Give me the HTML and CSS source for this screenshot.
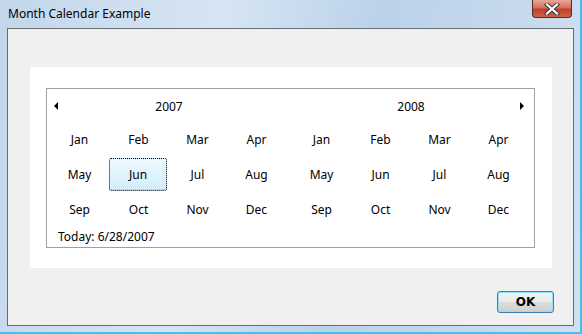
FILE: index.html
```html
<!DOCTYPE html>
<html lang="en">

<head>
    <meta charset="UTF-8">
    <title>Month Calendar Example</title>
    <link rel="stylesheet" href="styles.css">
</head>

<body>
    <div class="window">
        <div class="titlebar">
            <span class="title">Month Calendar Example</span>
            <button class="close-btn" aria-label="Close">
                <svg width="20" height="12" viewBox="0 0 20 12">
                    <path d="M5 1.5 L15 10.5 M15 1.5 L5 10.5" stroke="#3b3b3b" stroke-width="4.2" stroke-linecap="square"/>
                    <path d="M5 1.5 L15 10.5 M15 1.5 L5 10.5" stroke="#ffffff" stroke-width="2.2" stroke-linecap="square"/>
                </svg>
            </button>
        </div>
        <div class="client">
            <div class="panel">
                <div class="calendar">
                    <div class="panes">
                        <div class="pane">
                            <div class="pane-head">
                                <span class="arrow arrow-left"></span>
                                <span class="year">2007</span>
                                <span class="arrow-slot"></span>
                            </div>
                            <div class="months">
                                <span>Jan</span><span>Feb</span><span>Mar</span><span>Apr</span>
                                <span>May</span><span class="selected">Jun</span><span>Jul</span><span>Aug</span>
                                <span>Sep</span><span>Oct</span><span>Nov</span><span>Dec</span>
                            </div>
                        </div>
                        <div class="pane">
                            <div class="pane-head">
                                <span class="arrow-slot"></span>
                                <span class="year">2008</span>
                                <span class="arrow arrow-right"></span>
                            </div>
                            <div class="months">
                                <span>Jan</span><span>Feb</span><span>Mar</span><span>Apr</span>
                                <span>May</span><span>Jun</span><span>Jul</span><span>Aug</span>
                                <span>Sep</span><span>Oct</span><span>Nov</span><span>Dec</span>
                            </div>
                        </div>
                    </div>
                    <div class="today">Today: 6/28/2007</div>
                </div>
            </div>
            <div class="actions">
                <button class="ok-btn">OK</button>
            </div>
        </div>
    </div>
</body>

</html>
```

FILE: styles.css
```css
body {
    margin: 0;
    font-family: "Noto Sans", "Open Sans", sans-serif;
    font-size: 12px;
    color: #000;
}

.window {
    width: 582px;
    height: 334px;
    box-sizing: border-box;
    padding: 0 6px 6px 7px;
    background: linear-gradient(100deg, #c3d6ea 0%, #d6e5f4 35%, #bcd2e9 60%, #cfe0f1 100%);
    border-right: 2px solid #3fc2ee;
    border-bottom: 2px solid #3fc2ee;
    display: flex;
    flex-direction: column;
}

.titlebar {
    height: 28px;
    display: flex;
    justify-content: space-between;
    align-items: flex-start;
}

.title {
    margin-top: 5px;
    margin-left: 1px;
    font-size: 12px;
    color: #000;
}

.close-btn {
    width: 40px;
    height: 18px;
    margin-right: 2px;
    border: 1px solid #5a2a22;
    border-top: none;
    border-radius: 0 0 4px 4px;
    background: linear-gradient(#e9a79a 0%, #d4705d 45%, #c0412b 55%, #d0624a 100%);
    display: flex;
    align-items: center;
    justify-content: center;
    padding: 0;
}

.client {
    flex: 1;
    background-color: #f0f0f0;
    border: 1px solid #666c74;
    padding: 38px 21px 0 22px;
    display: flex;
    flex-direction: column;
}

.panel {
    background-color: #fff;
    padding: 21px 17px 20px 16px;
}

.calendar {
    border: 1px solid #a0a0a0;
    padding: 0 6px 0 3px;
}

.panes {
    display: flex;
    gap: 6px;
}

.pane {
    width: 236px;
}

.pane-head {
    height: 33px;
    padding-top: 1px;
    box-sizing: border-box;
    display: grid;
    grid-template-columns: 20px 1fr 20px;
    align-items: center;
}

.year {
    text-align: center;
    padding-left: 2px;
}

.arrow {
    width: 0;
    height: 0;
    border-top: 4px solid transparent;
    border-bottom: 4px solid transparent;
}

.arrow-left {
    border-right: 4px solid #000;
    margin-left: 4px;
}

.arrow-right {
    border-left: 4px solid #000;
    justify-self: end;
    margin-right: 4px;
}

.months {
    display: grid;
    grid-template-columns: repeat(4, 59px);
    grid-auto-rows: 35px;
}

.months span {
    display: flex;
    align-items: center;
    justify-content: center;
}

.months .selected {
    margin: 1px 1px 1px 0;
    border: 1px dotted #000;
    border-radius: 2px;
    background: linear-gradient(#eef8fe, #d3edfb);
    box-shadow: inset 0 -1px 0 #a9daf6;
}

.today {
    height: 20px;
    padding-left: 8px;
    line-height: 20px;
}

.actions {
    display: flex;
    justify-content: flex-end;
    margin-top: 23px;
    margin-right: -2px;
}

.ok-btn {
    width: 57px;
    height: 22px;
    border: 1px solid #3c7fb1;
    border-radius: 3px;
    background: linear-gradient(#f2f2f2 0%, #ebebeb 50%, #dddddd 51%, #cfcfcf 100%);
    box-shadow: inset 0 0 0 1px #8ee1fa;
    font-family: "DejaVu Sans", sans-serif;
    font-weight: bold;
    font-size: 12px;
    padding: 0;
    color: #000;
}
```
